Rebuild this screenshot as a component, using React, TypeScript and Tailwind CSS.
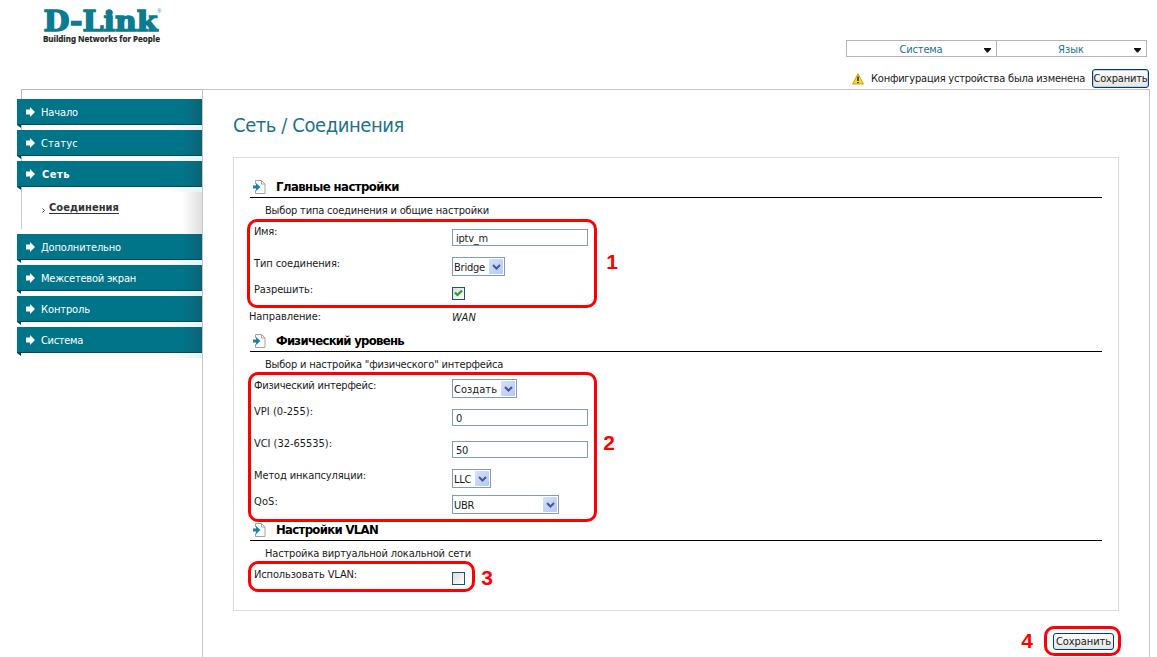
import { useLayoutEffect, useRef, useState } from "react";
import type { ReactNode } from "react";

/** A single line of text whose letter spacing is tuned to fill `w` pixels. */
function Fit({ w, children, className = "" }: { w: number; children: string; className?: string }) {
  const ref = useRef<HTMLSpanElement>(null);
  const [spacing, setSpacing] = useState(0);
  useLayoutEffect(() => {
    if (ref.current) {
      const natural = ref.current.getBoundingClientRect().width;
      setSpacing((w - natural) / children.length);
    }
  }, [w, children]);
  return (
    <span ref={ref} className={`inline-block whitespace-nowrap ${className}`} style={{ letterSpacing: `${spacing}px` }}>
      {children}
    </span>
  );
}

function Logo() {
  return (
    <svg width="124" height="46" viewBox="0 0 124 46" className="block overflow-visible">
      <text x="2.500" y="27" textLength="114" lengthAdjust="spacingAndGlyphs" fontSize="27" fontWeight="bold" fill="#0b7b8e" stroke="#0b7b8e" strokeWidth="1.300" className="font-['DejaVu_Serif',serif]">
        D-Link
      </text>
      <text x="116.500" y="9" fontSize="5" fill="#0b7b8e" className="font-['Liberation_Sans',sans-serif]">®</text>
      <text x="2" y="37.500" textLength="117" lengthAdjust="spacingAndGlyphs" fontSize="9" fontWeight="bold" fill="#222" stroke="#222" strokeWidth="0.200" className="font-['Noto_Sans',sans-serif]">
        Building Networks for People
      </text>
    </svg>
  );
}

function TopSelect({ label, w, first }: { label: string; w: number; first?: boolean }) {
  return (
    <div className={`flex h-[17px] items-center border border-[#b4b4b4] text-[#1b7389] ${first ? "w-[151px]" : "-ml-px w-[151px]"}`}>
      <div className="flex-1 pl-[11px] pt-px text-center leading-[15px]">
        <Fit w={w}>{label}</Fit>
      </div>
      <svg width="7" height="5" viewBox="0 0 7 5" className="mr-[5px] mt-[3px]">
        <path d="M0 0h7v1L4 4.5H3L0 1z" fill="#111" />
      </svg>
    </div>
  );
}

function NavItem({ label, w, bold }: { label: string; w: number; bold?: boolean }) {
  return (
    <div className="h-[31px] w-[185px]">
      <div className="flex h-[26px] items-center border-b border-[#06495a] bg-linear-to-r from-[#007488] from-90% to-[#0d6377] text-white">
        <svg width="9" height="10" viewBox="0 0 9 10" className="ml-[9px] mt-px">
          <path d="M0 2.5h4V0l5 5-5 5V7.500H0z" fill="#fff" />
        </svg>
        <Fit w={w} className={bold ? "ml-[7px] pt-[3px] font-bold" : "ml-[6px] pt-[3px]"}>{label}</Fit>
      </div>
      <div className="flex h-[5px]">
        <svg width="4" height="5" viewBox="0 0 4 5" className="bg-white">
          <path d="M0 0h4v3z" fill="#06495a" />
        </svg>
        <div className="ml-px flex-1 bg-linear-to-r from-white from-80% to-[#e4f3f5]" />
      </div>
    </div>
  );
}

function PageIcon() {
  return (
    <svg width="13" height="14" viewBox="0 0 13 14">
      <path d="M2.500 4V.5h6l3.500 3.500v9.500H2.500V10M8.500.5V4H12" fill="#fff" stroke="#a8a29c" />
      <path d="M0 5.500h3V3l4.500 4L3 11V8.500H0z" fill="#1b83a0" />
    </svg>
  );
}

function Section({ title, tw, note, nw, children }: { title: string; tw: number; note: string; nw: number; children: ReactNode }) {
  return (
    <section>
      <h2 className="flex h-6 items-center border-b border-black pl-[3px] pt-[3px] text-[13px] font-bold text-black">
        <PageIcon />
        <Fit w={tw} className="ml-[10px] leading-4">{title}</Fit>
      </h2>
      <p className="h-6 pl-[15px] leading-[26px]">
        <Fit w={nw}>{note}</Fit>
      </p>
      {children}
    </section>
  );
}

function Row({ label, w, size, top, outer, children }: { label: string; w: number; size: string; top: string; outer?: boolean; children: ReactNode }) {
  return (
    <div className={`flex ${size}`}>
      <div className={outer ? "-ml-px w-[203px] leading-5" : "w-[202px] pl-1 leading-5"}>
        <Fit w={w}>{label}</Fit>
      </div>
      <div className={top}>{children}</div>
    </div>
  );
}

function Input({ value, w }: { value: string; w: number }) {
  return (
    <div className="h-[17px] w-[136px] border border-[#7f9db9] bg-white pl-[3px] leading-[17px]">
      <Fit w={w}>{value}</Fit>
    </div>
  );
}

function Select({ value, w, size }: { value: string; w: number; size: string }) {
  return (
    <div className={`flex h-[19px] items-center justify-between border border-[#7f9db9] bg-white pl-px pr-px ${size}`}>
      <Fit w={w} className="pt-px leading-[19px]">{value}</Fit>
      <div className="flex h-[15px] w-[14px] items-center justify-center rounded-[1px] bg-linear-to-br from-[#d5e1fc] to-[#b4c8f4]">
        <svg width="9" height="6" viewBox="0 0 9 6">
          <path d="M1 1l3.500 3.500L8 1" fill="none" stroke="#43598a" strokeWidth="2" />
        </svg>
      </div>
    </div>
  );
}

function Check({ on }: { on?: boolean }) {
  return (
    <div className="flex h-[13px] w-[13px] items-center justify-center border border-[#1c5180] bg-linear-to-br from-[#dcdcd7] to-white">
      {on && (
        <svg width="9" height="9" viewBox="0 0 9 9">
          <path d="M1 3.500l2.500 2.500L8 1.500" fill="none" stroke="#21a121" strokeWidth="2.200" />
        </svg>
      )}
    </div>
  );
}

function Callout({ box, num, n }: { box: string; num: string; n: string }) {
  return (
    <>
      <div className={`absolute rounded-[10px] border-[3px] border-[#fe0000] ${box}`} />
      <div className={`absolute w-5 text-center font-['Liberation_Sans',sans-serif] text-[21px] leading-5 font-bold text-[#fe0000] ${num}`}>{n}</div>
    </>
  );
}

export default function App() {
  return (
    <div className="relative flex h-[657px] w-[1157px] flex-col overflow-hidden bg-white font-['DejaVu_Sans_Condensed','DejaVu_Sans',sans-serif] text-[11px] text-[#1a1a1a] font-stretch-condensed">
      <header className="flex h-[89px] justify-between">
        <div className="pl-[41px] pt-1">
          <Logo />
        </div>
        <div className="flex flex-col items-end pt-10">
          <div className="mr-[10px] flex">
            <TopSelect label="Система" w={43} first />
            <TopSelect label="Язык" w={26} />
          </div>
          <div className="mr-2 mt-3 flex h-[19px] items-center">
            <svg width="12" height="12" viewBox="0 0 12 12">
              <path d="M6 .8L11.500 11H.5z" fill="#f9d92c" stroke="#c9a41a" strokeLinejoin="round" />
              <path d="M6 3.500V8M6 9v1.200" stroke="#222" strokeWidth="1.500" />
            </svg>
            <Fit w={214} className="ml-[7px] pt-[2px]">Конфигурация устройства была изменена</Fit>
            <button className="ml-[7px] flex h-[19px] w-[57px] items-center justify-center rounded-[3px] border border-[#003c74] bg-linear-to-b from-white to-[#e6e5e0] shadow-[inset_0_0_0_1px_#bcd0f0]">
              <Fit w={54} className="pt-[2px]">Сохранить</Fit>
            </button>
          </div>
        </div>
      </header>

      <div className="mr-[7px] flex min-h-0 flex-1">
        <aside className="relative w-[202px] shrink-0">
          <div className="absolute left-[21px] top-0 h-[140px] w-px bg-[#b9b9b9]" />
          <div className="ml-[21px] h-[10px] border-t border-[#b9b9b9]" />
          <nav className="relative pl-[17px]">
            <NavItem label="Начало" w={37} />
            <NavItem label="Статус" w={37} />
            <NavItem label="Сеть" w={28} bold />
            <div className="ml-1 flex h-[42px] justify-between">
              <div className="flex h-[37px] items-center border-l border-[#c9c9c9] pb-[4px] pl-[20px]">
                <svg width="3" height="5" viewBox="0 0 3 5" className="mt-[3px]">
                  <path d="M.5.5l2 2-2 2" fill="none" stroke="#444" />
                </svg>
                <Fit w={70} className="ml-1 font-bold text-[#333] underline underline-offset-2">Соединения</Fit>
              </div>
              <div className="h-[42px] w-5 bg-linear-to-r from-white to-[#dedede]" />
            </div>
            <NavItem label="Дополнительно" w={80} />
            <NavItem label="Межсетевой экран" w={95} />
            <NavItem label="Контроль" w={49} />
            <NavItem label="Система" w={42} />
          </nav>
        </aside>

        <main className="flex-1 border-l border-r border-t border-[#c6c6c6] pl-[30px]">
          <h1 className="h-[67px] pt-[23px] text-[20px] leading-6 text-[#1b7389]">
            <Fit w={171}>Сеть / Соединения</Fit>
          </h1>
          <div className="h-[454px] w-[886px] border border-[#dcdcdc] px-4 pt-4">
            <Section title="Главные настройки" tw={123} note="Выбор типа соединения и общие настройки" nw={224}>
              <Row label="Имя:" w={23} size="h-8" top="pt-[7px]"><Input value="iptv_m" w={32} /></Row>
              <Row label="Тип соединения:" w={86} size="h-[26px]" top="pt-[3px]"><Select value="Bridge" w={31} size="w-[53px]" /></Row>
              <Row label="Разрешить:" w={59} size="h-[27px]" top="pt-[7px]"><Check on /></Row>
              <Row label="Направление:" w={72} size="h-[21px]" top="leading-[21px]" outer><Fit w={24} className="italic">WAN</Fit></Row>
            </Section>
            <Section title="Физический уровень" tw={128} note={'Выбор и настройка "физического" интерфейса'} nw={238}>
              <Row label="Физический интерфейс:" w={122} size="h-[26px]" top="pt-[3px]"><Select value="Создать" w={43} size="w-[65px]" /></Row>
              <Row label="VPI (0-255):" w={59} size="h-8" top="pt-[7px]"><Input value="0" w={6} /></Row>
              <Row label="VCI (32-65535):" w={78} size="h-8" top="pt-[7px]"><Input value="50" w={12} /></Row>
              <Row label="Метод инкапсуляции:" w={112} size="h-[26px]" top="pt-[3px]"><Select value="LLC" w={17} size="w-[39px]" /></Row>
              <Row label="QoS:" w={24} size="h-[25px]" top="pt-[3px]"><Select value="UBR" w={20} size="w-[107px]" /></Row>
            </Section>
            <Section title="Настройки VLAN" tw={102} note="Настройка виртуальной локальной сети" nw={206}>
              <Row label="Использовать VLAN:" w={103} size="h-[26px]" top="pt-[7px]"><Check /></Row>
            </Section>
          </div>
          <div className="flex justify-end pr-[35px] pt-[22px]">
            <button className="flex h-[17px] w-[61px] items-center justify-center rounded-[3px] border border-[#003c74] bg-linear-to-b from-white to-[#e6e5e0]">
              <Fit w={55} className="pt-[2px]">Сохранить</Fit>
            </button>
          </div>
        </main>
      </div>

      <Callout n="1" box="left-[247px] top-[219px] h-[89px] w-[350px]" num="left-[602px] top-[252px]" />
      <Callout n="2" box="left-[248px] top-[372px] h-[150px] w-[349px]" num="left-[599px] top-[433px]" />
      <Callout n="3" box="left-[248px] top-[561px] h-[31px] w-[227px]" num="left-[477px] top-[568px]" />
      <Callout n="4" box="left-[1044px] top-[626px] h-[30px] w-[77px]" num="left-[1017px] top-[631px]" />
    </div>
  );
}
